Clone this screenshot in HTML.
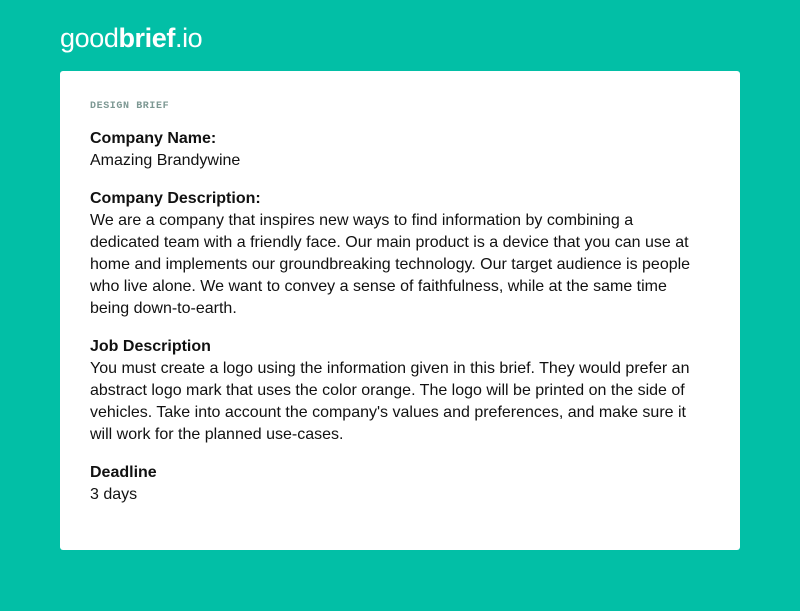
<!DOCTYPE html>
<html><head><style>
html,body{margin:0;padding:0}
body{width:800px;height:611px;background:#02bfa6;font-family:"Liberation Sans",sans-serif;position:relative;overflow:hidden}
.logo{position:absolute;left:60px;top:20px;font-size:27px;color:#fff;letter-spacing:-0.4px;font-weight:300;line-height:36px}
.logo b{font-weight:700}
.card{position:absolute;left:60px;top:71px;width:680px;height:479px;background:#fff;border-radius:3px}
.lbl{position:absolute;left:30px;top:30px;font-family:"Liberation Mono",monospace;font-weight:bold;font-size:10px;color:#7d9893;letter-spacing:0.6px}
.c{position:absolute;left:30px;top:57px;width:630px;font-size:16px;line-height:22px;color:#111}
.c h{display:block;font-weight:bold}
.c p{margin:0 0 16px 0}
</style></head><body>
<div class="logo">good<b>brief</b>.io</div>
<div class="card">
<div class="lbl">DESIGN BRIEF</div>
<div class="c">
<p><h>Company Name:</h>Amazing Brandywine</p>
<p><h>Company Description:</h>We are a company that inspires new ways to find information by combining a<br>dedicated team with a friendly face. Our main product is a device that you can use at<br>home and implements our groundbreaking technology. Our target audience is people<br>who live alone. We want to convey a sense of faithfulness, while at the same time<br>being down-to-earth.</p>
<p><h>Job Description</h>You must create a logo using the information given in this brief. They would prefer an<br>abstract logo mark that uses the color orange. The logo will be printed on the side of<br>vehicles. Take into account the company's values and preferences, and make sure it<br>will work for the planned use-cases.</p>
<p><h>Deadline</h>3 days</p>
</div>
</div>
</body></html>
